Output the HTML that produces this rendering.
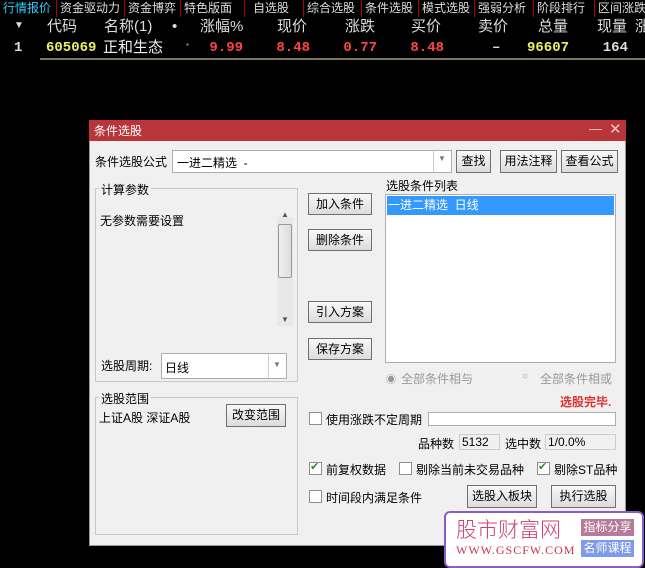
<!DOCTYPE html>
<html><head><meta charset="utf-8"><style>
*{margin:0;padding:0;box-sizing:border-box}
body{width:645px;height:567px;background:#000;position:relative;overflow:hidden;font-family:"Liberation Sans","Noto Sans CJK SC",sans-serif;font-size:12px}
.a{position:absolute;white-space:nowrap}
.tab{position:absolute;top:0;height:17px;line-height:16px;color:#ddd;font-size:12px;border-right:1px solid #a00;padding:0 3px}
.h{position:absolute;top:17px;line-height:20px;color:#ddd;font-size:15px}
.d{position:absolute;top:38px;line-height:20px;font-size:14px;font-weight:bold;font-family:"Liberation Mono","Noto Sans CJK SC",monospace}
.btn{position:absolute;background:linear-gradient(#f8f8f8,#dcdcdc);border:1px solid #707070;text-align:center;color:#000;font-size:12px}
.box{position:absolute;background:#fff;border:1px solid #abadb3}
.grp{position:absolute;border:1px solid #c8c8c8}
.cb{position:absolute;width:13px;height:13px;border:1px solid #8f8f8f;background:#fff}
.t{position:absolute;color:#000;font-size:12px;white-space:nowrap}
</style></head><body>
<div class="tab" style="left:0;width:57px;color:#3cf">行情报价</div>
<div class="tab" style="left:57px;width:68px">资金驱动力</div>
<div class="tab" style="left:125px;width:56px">资金博弈</div>
<div class="tab" style="left:181px;width:64px">特色版面</div>
<div class="tab" style="left:245px;width:59px;padding-left:8px">自选股</div>
<div class="tab" style="left:304px;width:58px">综合选股</div>
<div class="tab" style="left:362px;width:57px">条件选股</div>
<div class="tab" style="left:419px;width:56px">模式选股</div>
<div class="tab" style="left:475px;width:59px">强弱分析</div>
<div class="tab" style="left:534px;width:61px">阶段排行</div>
<div class="tab" style="left:595px;width:60px">区间涨跌</div>
<div class="a" style="left:14px;top:20px;color:#ddd;font-size:10px">▼</div>
<div class="h" style="left:47px">代码</div>
<div class="h" style="left:104px">名称(1)</div>
<div class="h" style="left:172px">•</div>
<div class="h" style="left:200px">涨幅%</div>
<div class="h" style="left:277px">现价</div>
<div class="h" style="left:345px">涨跌</div>
<div class="h" style="left:411px">买价</div>
<div class="h" style="left:478px">卖价</div>
<div class="h" style="left:538px">总量</div>
<div class="h" style="left:597px">现量</div>
<div class="h" style="left:635px">涨</div>
<div class="d" style="left:14px;color:#ddd">1</div>
<div class="d" style="left:46px;color:#ee6">605069</div>
<div class="a" style="left:103px;top:38px;line-height:20px;color:#eee;font-size:15px">正和生态</div>
<div class="a" style="left:186px;top:40px;color:#c6c;font-size:8px">▪</div>
<div class="d" style="left:206px;width:37px;text-align:right;color:#f44">9.99</div>
<div class="d" style="left:270px;width:40px;text-align:right;color:#f44">8.48</div>
<div class="d" style="left:337px;width:40px;text-align:right;color:#f44">0.77</div>
<div class="d" style="left:404px;width:40px;text-align:right;color:#f44">8.48</div>
<div class="d" style="left:492px;color:#ddd">–</div>
<div class="d" style="left:520px;width:49px;text-align:right;color:#ee6">96607</div>
<div class="d" style="left:590px;width:38px;text-align:right;color:#ddd">164</div>
<div class="a" style="left:40px;top:58px;width:605px;height:2px;background:#776"></div>

<div class="a" style="left:89px;top:120px;width:537px;height:426px;background:#f0f0f0;border:1px solid #999"></div>
<div class="a" style="left:89px;top:120px;width:537px;height:21px;background:#b8353a"></div>
<div class="a" style="left:94px;top:122px;color:#fff;font-size:12px">条件选股</div>
<div class="a" style="left:589px;top:121px;color:#f2c5c5;font-size:13px">—</div>
<div class="a" style="left:609px;top:120px;color:#f2c5c5;font-size:15px">✕</div>

<div class="t" style="left:95px;top:153px">条件选股公式</div>
<div class="box" style="left:172px;top:150px;width:280px;height:23px"></div>
<div class="t" style="left:177px;top:154px">一进二精选 &nbsp;-</div>
<div class="a" style="left:433px;top:151px;width:1px;height:21px;background:#ccc"></div>
<div class="a" style="left:438px;top:154px;color:#777;font-size:8px">▼</div>
<div class="btn" style="left:456px;top:150px;width:35px;height:23px;line-height:21px">查找</div>
<div class="btn" style="left:500px;top:150px;width:57px;height:23px;line-height:21px">用法注释</div>
<div class="btn" style="left:561px;top:150px;width:57px;height:23px;line-height:21px">查看公式</div>

<div class="grp" style="left:95px;top:188px;width:203px;height:194px"></div>
<div class="t" style="left:99px;top:181px;background:#f0f0f0;padding:0 2px">计算参数</div>
<div class="t" style="left:100px;top:212px">无参数需要设置</div>
<div class="a" style="left:277px;top:217px;width:16px;height:109px;background:#e8e8e8"></div>
<div class="a" style="left:281px;top:210px;color:#555;font-size:8px">▲</div>
<div class="a" style="left:278px;top:224px;width:14px;height:54px;background:linear-gradient(90deg,#eee,#ddd);border:1px solid #999;border-radius:2px"></div>
<div class="a" style="left:281px;top:315px;color:#555;font-size:8px">▼</div>
<div class="t" style="left:101px;top:357px">选股周期:</div>
<div class="box" style="left:161px;top:353px;width:126px;height:26px"></div>
<div class="t" style="left:165px;top:359px">日线</div>
<div class="a" style="left:268px;top:354px;width:1px;height:24px;background:#ccc"></div>
<div class="a" style="left:273px;top:360px;color:#777;font-size:8px">▼</div>

<div class="btn" style="left:308px;top:193px;width:64px;height:22px;line-height:20px">加入条件</div>
<div class="btn" style="left:308px;top:229px;width:64px;height:22px;line-height:20px">删除条件</div>
<div class="btn" style="left:308px;top:301px;width:64px;height:22px;line-height:20px">引入方案</div>
<div class="btn" style="left:308px;top:338px;width:64px;height:22px;line-height:20px">保存方案</div>

<div class="t" style="left:386px;top:177px">选股条件列表</div>
<div class="box" style="left:385px;top:194px;width:231px;height:169px"></div>
<div class="a" style="left:387px;top:196px;width:227px;height:19px;background:#3399ff;color:#fff;font-size:12px;line-height:19px;padding-left:1px">一进二精选 &nbsp;日线</div>
<div class="a" style="left:386px;top:371px;color:#999;font-size:10px">◉</div>
<div class="t" style="left:401px;top:370px;color:#999">全部条件相与</div>
<div class="a" style="left:522px;top:371px;color:#999;font-size:10px">○</div>
<div class="t" style="left:540px;top:370px;color:#999">全部条件相或</div>
<div class="t" style="left:560px;top:393px;color:#e03030;font-weight:bold">选股完毕.</div>

<div class="grp" style="left:95px;top:397px;width:203px;height:138px"></div>
<div class="t" style="left:99px;top:390px;background:#f0f0f0;padding:0 2px">选股范围</div>
<div class="t" style="left:99px;top:409px">上证A股 深证A股</div>
<div class="btn" style="left:226px;top:404px;width:60px;height:23px;line-height:21px">改变范围</div>

<div class="cb" style="left:309px;top:412px"></div>
<div class="t" style="left:326px;top:411px">使用涨跌不定周期</div>
<div class="box" style="left:428px;top:412px;width:188px;height:14px"></div>
<div class="t" style="left:418px;top:435px">品种数</div>
<div class="a" style="left:459px;top:434px;width:41px;height:16px;border:1px solid #ccc;background:#f0f0f0;font-size:12px;line-height:14px;padding-left:2px">5132</div>
<div class="t" style="left:505px;top:435px">选中数</div>
<div class="a" style="left:545px;top:434px;width:71px;height:16px;border:1px solid #ccc;background:#f0f0f0;font-size:12px;line-height:14px;padding-left:2px">1/0.0%</div>

<div class="cb" style="left:309px;top:462px"></div><div class="a" style="left:310px;top:460px;color:#2a8a2a;font-size:11px">✔</div>
<div class="t" style="left:326px;top:461px">前复权数据</div>
<div class="cb" style="left:399px;top:462px"></div>
<div class="t" style="left:416px;top:461px">剔除当前未交易品种</div>
<div class="cb" style="left:537px;top:462px"></div><div class="a" style="left:538px;top:460px;color:#2a8a2a;font-size:11px">✔</div>
<div class="t" style="left:554px;top:461px">剔除ST品种</div>

<div class="cb" style="left:309px;top:490px"></div>
<div class="t" style="left:326px;top:489px">时间段内满足条件</div>
<div class="btn" style="left:467px;top:485px;width:70px;height:23px;line-height:21px">选股入板块</div>
<div class="btn" style="left:551px;top:485px;width:65px;height:23px;line-height:21px">执行选股</div>

<div class="a" style="left:444px;top:511px;width:200px;height:57px;background:#fff;border:2px solid #8a5cc8;border-radius:6px"></div>
<div class="a" style="left:456px;top:516px;font-size:21px;color:#d04070;font-family:'Noto Sans CJK SC',sans-serif;font-weight:300;line-height:26px">股市财富网</div>
<div class="a" style="left:456px;top:543px;font-size:12px;color:#d03050;font-family:'Liberation Serif',serif;letter-spacing:1px">WWW.GSCFW.COM</div>
<div class="a" style="left:581px;top:519px;width:53px;height:17px;background:#b77a9a;color:#fff;font-size:12px;line-height:17px;text-align:center">指标分享</div>
<div class="a" style="left:581px;top:540px;width:53px;height:17px;background:#7f9ae8;color:#fff;font-size:12px;line-height:17px;text-align:center">名师课程</div>
</body></html>
